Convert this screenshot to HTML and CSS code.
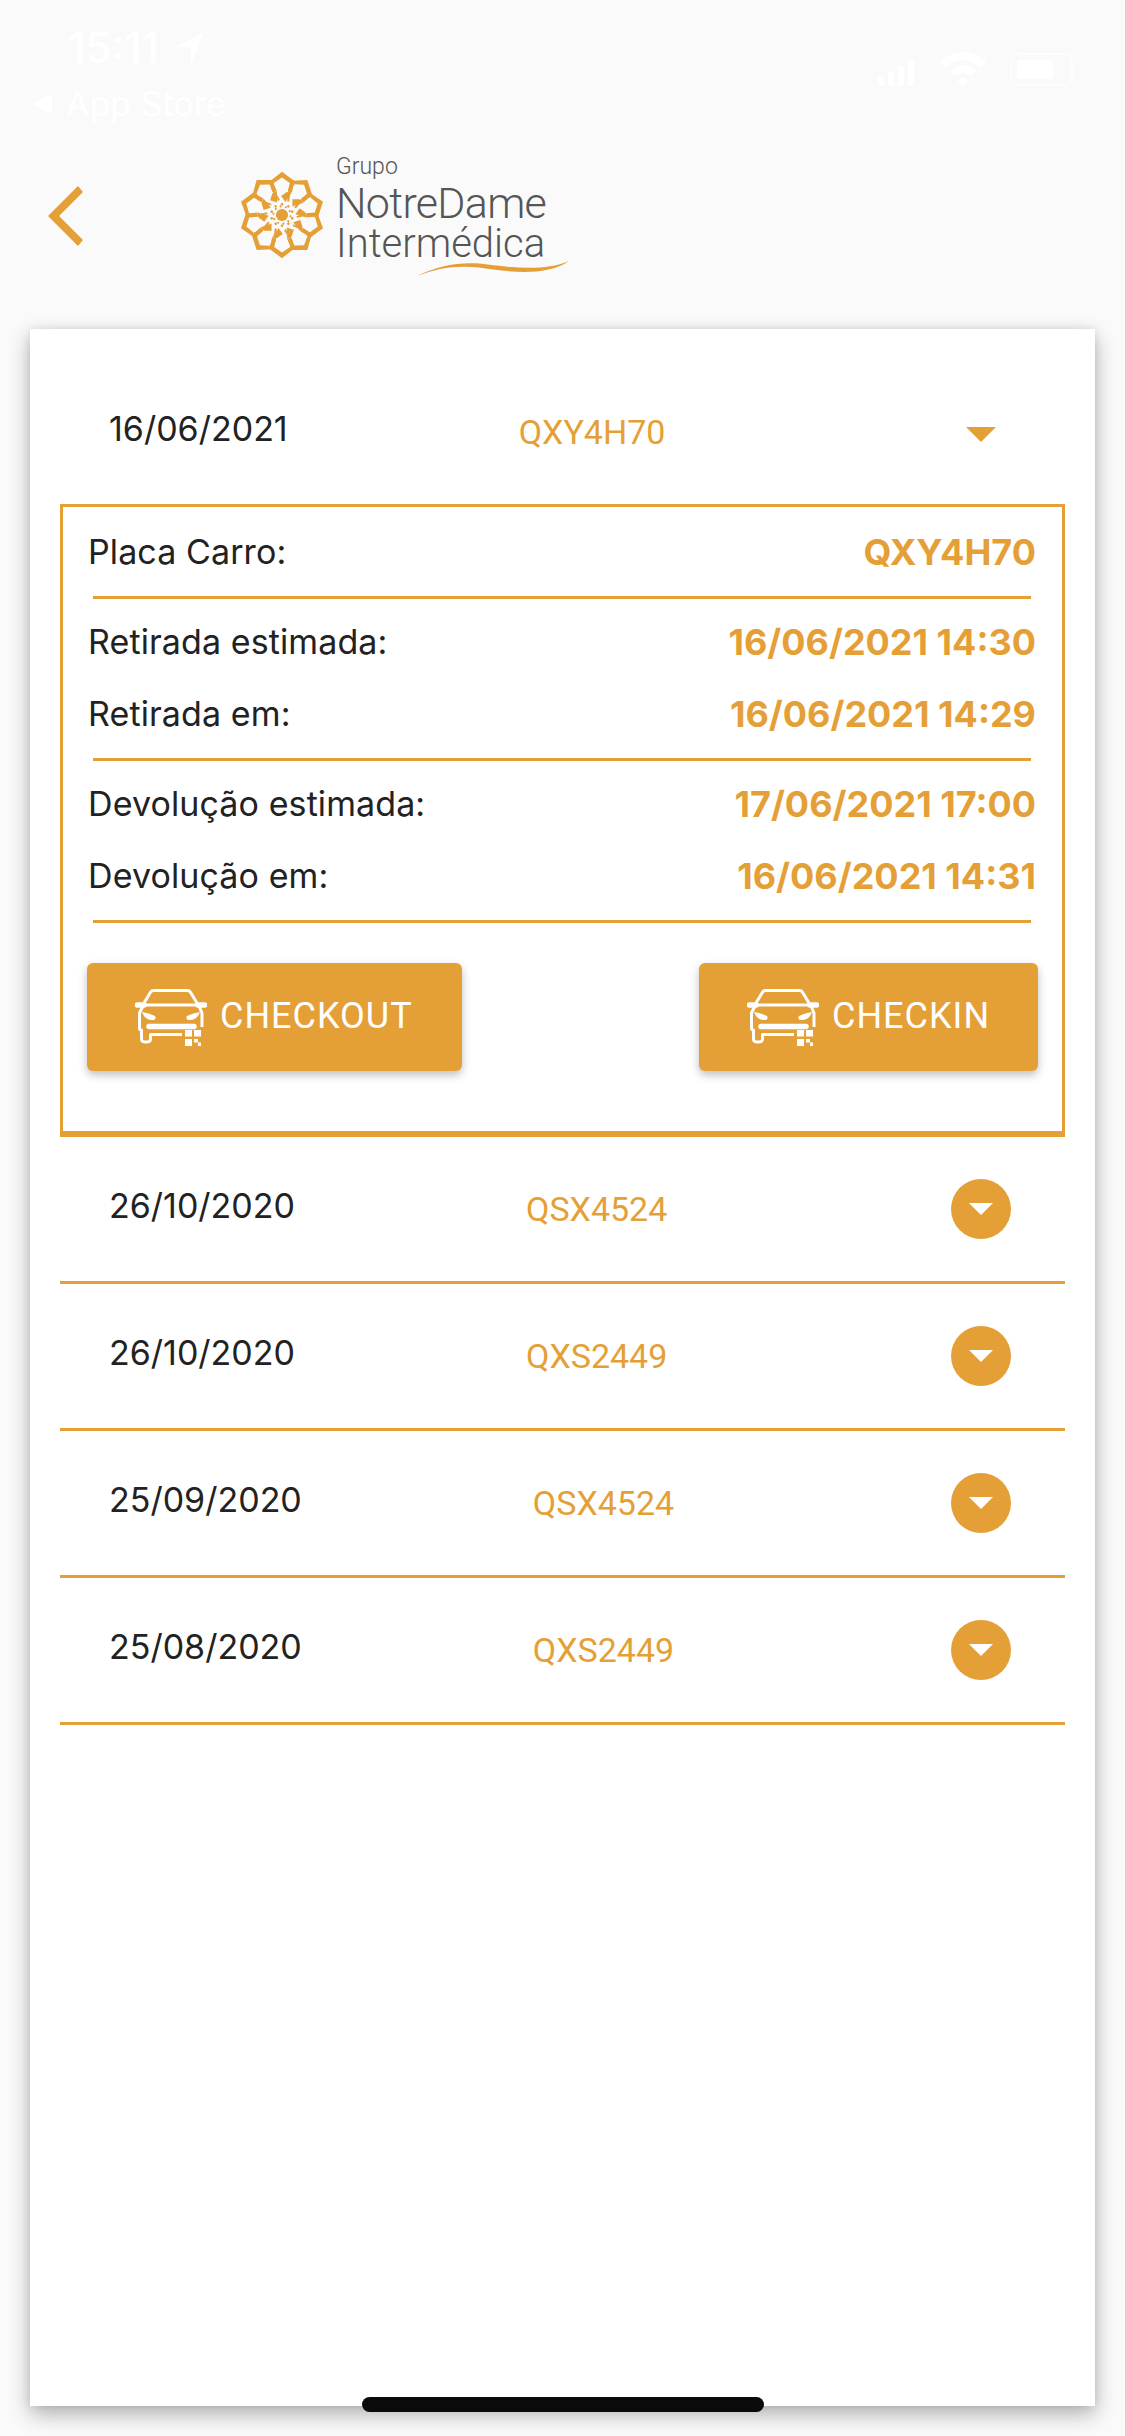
FILE: index.html
```html
<!DOCTYPE html>
<html lang="pt-BR">
<head>
<meta charset="utf-8">
<title>Checklist</title>
<link rel="stylesheet" href="styles.css">
</head>
<body>
<svg class="defs" width="0" height="0" aria-hidden="true">
  <defs>
    <g id="lobe">
      <polygon points="0,-100 29,-79 23,-52 14,-56 18,-74 0,-87 -18,-75 -28,-78"/>
      <polygon points="-28,-78 -24,-58 -20,-60 -18,-75"/>
      <polygon points="23,-52 8,-30 -2,-44 12,-54"/>
      <polygon points="-24,-58 -8,-32 -5,-36 -20,-60"/>
      <circle cx="0" cy="-25" r="3"/>
      <circle cx="9" cy="-18" r="2.500"/>
    </g>
    <g id="car">
      <path class="car-line" d="M9 14 15.500 3.200Q16.500 1.500 19 1.500H52Q54.500 1.500 55.500 3.200L62 14"/>
      <path class="car-line" d="M2 16H70" stroke-width="2.500"/>
      <path class="car-thick" d="M2.500 16H9M63 16H69.500"/>
      <path class="car-line" d="M8 17 4.500 24V39Q4.500 41 6.500 41V50Q6.500 53 11 53 15.500 53 15.500 50V45.500H47"/>
      <path class="car-line" d="M64 17 67 24V38"/>
      <path class="car-fill" d="M7 23Q14 24 20 27 22 31 17 31 10 31 7 23ZM65 23Q58 24 52 27 50 31 55 31 62 31 65 23Z"/>
      <path class="car-thick" d="M14 37.500H59"/>
      <path class="car-fill" d="M50 41H57V47.500H50ZM59 41H66V47.500H59ZM50 50H57V57H50ZM59 50H63V53.500H59ZM63 53.500H66V57H63Z"/>
    </g>
  </defs>
</svg>

<div class="status">
  <div class="status-row">
    <div class="status-left">
      <span class="time">15:11</span>
      <svg class="loc" viewBox="0 0 31 31"><path d="M31 0 18 31V14H2Z"/></svg>
    </div>
    <div class="status-right">
      <svg class="signal" viewBox="0 0 38 26"><path d="M0 17H6V26H0ZM10 12H16V26H10ZM20 6H26V26H20ZM30 0H36V26H30Z"/></svg>
      <svg class="wifi" viewBox="0 0 46 34"><path d="M23 0C32 0 40 4 46 10L41 16C36 11 30 8 23 8 16 8 10 11 5 16L0 10C6 4 14 0 23 0ZM23 13C28 13 32 15 36 19L31 24C29 22 26 21 23 21 20 21 17 22 15 24L10 19C14 15 18 13 23 13ZM23 25 29 29 23 34 17 29Z"/></svg>
      <div class="battery"><div class="battery-fill"></div></div>
    </div>
  </div>
  <div class="back-app">
    <svg class="back-tri" viewBox="0 0 20 20"><path d="M20 0V20L0 10Z"/></svg>
    <span>App Store</span>
  </div>
</div>

<header class="header">
  <svg class="chevron" viewBox="0 0 35 60"><polygon points="30,0 35,6 11,30 35,54 30,60 0,30"/></svg>
  <div class="logo">
    <svg class="mandala" viewBox="-102 -102 204 204">
      <use href="#lobe"/>
      <use href="#lobe" transform="rotate(36)"/>
      <use href="#lobe" transform="rotate(72)"/>
      <use href="#lobe" transform="rotate(108)"/>
      <use href="#lobe" transform="rotate(144)"/>
      <use href="#lobe" transform="rotate(180)"/>
      <use href="#lobe" transform="rotate(216)"/>
      <use href="#lobe" transform="rotate(252)"/>
      <use href="#lobe" transform="rotate(288)"/>
      <use href="#lobe" transform="rotate(324)"/>
      <circle r="14"/>
    </svg>
    <div class="logo-text">
      <span class="logo-small">Grupo</span>
      <span class="logo-big">NotreDame</span>
      <span class="logo-mid">Intermédica</span>
    </div>
    <svg class="swoosh" viewBox="0 0 152 15"><path d="M0 15C20 5 40 1 62 2.500 85 5 125 12 152 0 128 17 85 10 62 6.500 40 4 20 7 0 15Z"/></svg>
  </div>
</header>

<main class="card">
  <div class="row row-open">
    <span class="date">16/06/2021</span>
    <span class="plate">QXY4H70</span>
    <span class="toggle"><span class="tri tri-orange"></span></span>
  </div>

  <section class="panel">
    <div class="detail detail-first"><span class="label">Placa Carro:</span><span class="value">QXY4H70</span></div>
    <div class="rule"></div>
    <div class="detail"><span class="label">Retirada estimada:</span><span class="value">16/06/2021 14:30</span></div>
    <div class="detail"><span class="label">Retirada em:</span><span class="value">16/06/2021 14:29</span></div>
    <div class="rule"></div>
    <div class="detail"><span class="label">Devolução estimada:</span><span class="value">17/06/2021 17:00</span></div>
    <div class="detail"><span class="label">Devolução em:</span><span class="value">16/06/2021 14:31</span></div>
    <div class="rule"></div>
    <div class="actions">
      <button class="btn btn-out"><svg class="car" viewBox="0 0 72 57"><use href="#car"/></svg><span>CHECKOUT</span></button>
      <button class="btn btn-in"><svg class="car" viewBox="0 0 72 57"><use href="#car"/></svg><span>CHECKIN</span></button>
    </div>
  </section>

  <div class="row">
    <span class="date">26/10/2020</span>
    <span class="plate">QSX4524</span>
    <span class="toggle toggle-on"><span class="tri"></span></span>
  </div>
  <div class="row">
    <span class="date">26/10/2020</span>
    <span class="plate">QXS2449</span>
    <span class="toggle toggle-on"><span class="tri"></span></span>
  </div>
  <div class="row">
    <span class="date">25/09/2020</span>
    <span class="plate">QSX4524</span>
    <span class="toggle toggle-on"><span class="tri"></span></span>
  </div>
  <div class="row">
    <span class="date">25/08/2020</span>
    <span class="plate">QXS2449</span>
    <span class="toggle toggle-on"><span class="tri"></span></span>
  </div>
</main>

<div class="home-bar"></div>
</body>
</html>
```

FILE: styles.css
```css
* { box-sizing: border-box; }

html, body {
  margin: 0;
  padding: 0;
}

body {
  position: relative;
  width: 1125px;
  height: 2436px;
  overflow: hidden;
  display: flex;
  flex-direction: column;
  background: #fafafa;
  font-family: "Inter", "Liberation Sans", sans-serif;
  color: #222;
}

.defs { position: absolute; }

/* status bar */
.status {
  height: 150px;
  padding: 28px 52px 0 32px;
  color: #fff;
  flex: none;
}

.status-row {
  display: flex;
  justify-content: space-between;
  align-items: flex-start;
  height: 58px;
}

.status-left {
  display: flex;
  align-items: center;
  gap: 14px;
  padding-left: 36px;
}

.time {
  font-size: 42px;
  line-height: 40px;
  font-weight: 500;
}

.loc { width: 31px; height: 31px; fill: #fff; }

.status-right {
  display: flex;
  align-items: flex-end;
  gap: 24px;
  padding-top: 24px;
}

.signal { width: 38px; height: 26px; fill: #fff; }
.wifi { width: 46px; height: 34px; fill: #fff; }

.battery {
  width: 63px;
  height: 33px;
  border: 2px solid rgba(255, 255, 255, .6);
  border-radius: 8px;
  padding: 5px;
}

.battery-fill {
  width: 36px;
  height: 100%;
  background: #fff;
  border-radius: 3px;
}

.back-app {
  display: flex;
  align-items: center;
  gap: 14px;
  font-size: 34px;
  line-height: 36px;
}

.back-tri { width: 20px; height: 20px; fill: #fff; }

/* header */
.header {
  display: flex;
  align-items: flex-start;
  flex: none;
  height: 179px;
  padding-left: 48px;
}

.chevron {
  width: 35px;
  height: 60px;
  margin-top: 36px;
  fill: #e59f37;
  flex: none;
}

.logo {
  position: relative;
  display: flex;
  align-items: flex-start;
  margin-left: 155px;
  gap: 10px;
}

.mandala {
  width: 88px;
  height: 88px;
  margin-top: 21px;
  fill: #e59f37;
  flex: none;
}

.logo-text {
  display: flex;
  flex-direction: column;
  color: #555;
  font-family: "Roboto", "Liberation Sans", sans-serif;
  font-weight: 300;
}

.logo-small { font-size: 23px; line-height: 26px; margin-top: 4px; }
.logo-big { font-size: 43px; line-height: 44px; letter-spacing: -.7px; margin-top: 1px; }
.logo-mid { font-size: 40px; line-height: 38px; }

.swoosh {
  position: absolute;
  left: 179px;
  top: 111px;
  width: 152px;
  height: 15px;
  fill: #e59f37;
}

/* card */
.card {
  flex: none;
  height: 2077px;
  margin: 0 30px;
  padding: 33px 30px 0;
  background: #fff;
  box-shadow: 0 8px 20px rgba(0, 0, 0, .3), 0 0 8px rgba(0, 0, 0, .08);
}

.row {
  display: flex;
  align-items: center;
  height: 147px;
  padding: 0 54px 0 49px;
  border-bottom: 3px solid #e59f37;
}

.row-open {
  height: 142px;
  border-bottom: 0;
}

.date {
  font-size: 34px;
  line-height: 40px;
  color: #222;
  margin-right: 231px;
  margin-bottom: 6px;
}

.row-open .date { margin-bottom: 9px; }
.row-open .plate { margin-bottom: 2px; }

.plate {
  font-family: "Roboto", sans-serif;
  font-size: 34px;
  line-height: 40px;
  color: #e59f37;
}

.toggle {
  margin-left: auto;
  width: 60px;
  height: 60px;
  border-radius: 50%;
  display: flex;
  align-items: center;
  justify-content: center;
  flex: none;
}

.toggle-on { background: #e59f37; }

.tri {
  width: 0;
  height: 0;
  border-left: 12px solid transparent;
  border-right: 12px solid transparent;
  border-top: 12px solid #fff;
}

.tri-orange {
  border-left-width: 15px;
  border-right-width: 15px;
  border-top: 15px solid #e59f37;
  margin-top: 2px;
}

/* open panel */
.panel {
  height: 633px;
  padding: 9px 26px 0 25px;
  border: 3px solid #e59f37;
  border-bottom-width: 6px;
}

.detail {
  display: flex;
  justify-content: space-between;
  align-items: center;
  height: 72px;
}

.detail-first { height: 73px; }

.label {
  font-size: 34px;
  line-height: 40px;
  letter-spacing: .1px;
  color: #222;
  margin-bottom: 2px;
}

.value {
  font-size: 36px;
  line-height: 40px;
  font-weight: 700;
  color: #e59f37;
  margin-bottom: 2px;
}

.rule {
  height: 3px;
  margin: 7px 5px 8px 5px;
  background: #e59f37;
}

.actions {
  display: flex;
  justify-content: space-between;
  margin-top: 40px;
  margin-left: -1px;
  margin-right: -2px;
}

.btn {
  display: flex;
  align-items: center;
  gap: 13px;
  height: 108px;
  padding: 0 0 3px 48px;
  border: 0;
  border-radius: 6px;
  background: #e59f37;
  color: #fff;
  font-family: "Roboto", sans-serif;
  font-size: 36px;
  letter-spacing: 1px;
  font-weight: 400;
  box-shadow: 0 4px 8px rgba(0, 0, 0, .25);
}

.btn-out { width: 375px; }
.btn-in { width: 339px; }

.car {
  width: 72px;
  height: 57px;
  margin-top: 3px;
  flex: none;
}

.car-line { fill: none; stroke: #fff; stroke-width: 3; stroke-linejoin: round; }
.car-thick { fill: none; stroke: #fff; stroke-width: 5.500; stroke-linecap: round; }
.car-fill { fill: #fff; }

/* home indicator */
.home-bar {
  position: absolute;
  left: 362px;
  top: 2397px;
  width: 402px;
  height: 15px;
  border-radius: 8px;
  background: #0a0a0a;
}
```
